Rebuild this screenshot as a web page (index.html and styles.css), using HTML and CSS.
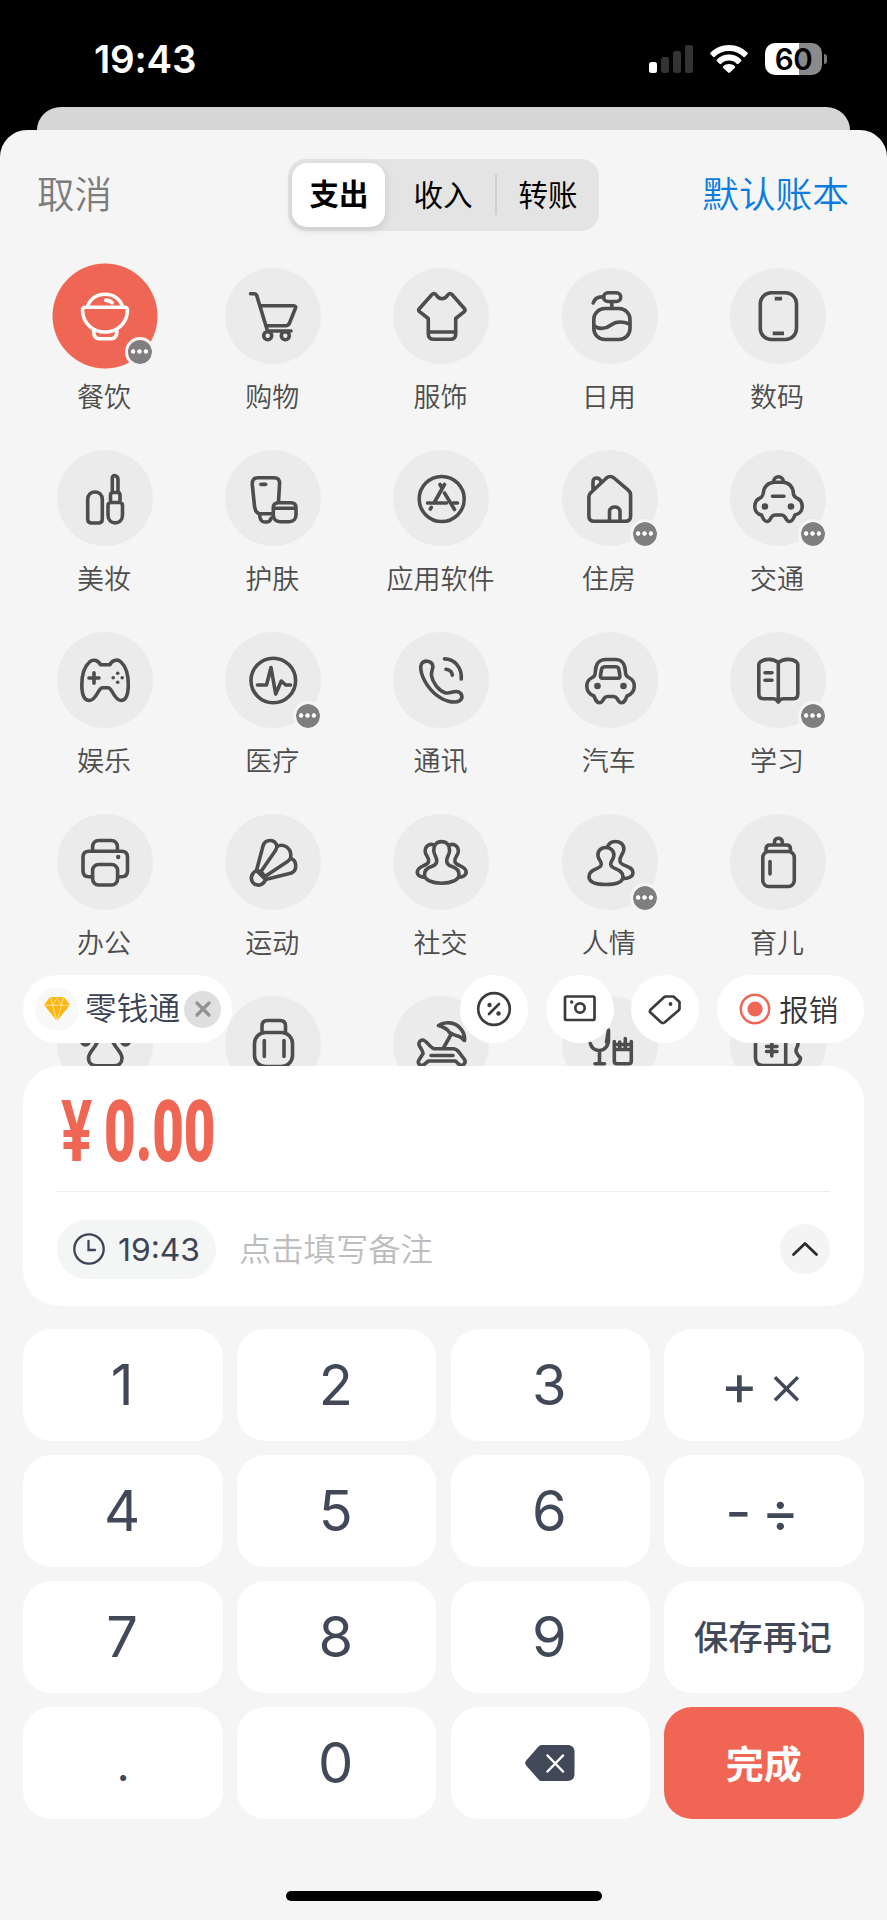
FILE: index.html
```html
<!DOCTYPE html>
<html lang="zh-CN">
<head>
<meta charset="utf-8">
<title>记一笔</title>
<link rel="stylesheet" href="styles.css">
</head>
<body>
<header class="status">
  <span class="status-time">19:43</span>
  <div class="status-icons">
    <svg class="signal" width="44" height="28" viewBox="0 0 44 28"><rect x="0" y="17" width="8" height="11" rx="2.5" fill="#fff"/><g fill="#333"><rect x="12" y="12" width="8" height="16" rx="2.5"/><rect x="24" y="6" width="8" height="22" rx="2.5"/><rect x="36" y="0" width="8" height="28" rx="2.5"/></g></svg>
    <svg class="wifi" width="38" height="28" viewBox="0 0 38 28" fill="#fff"><path d="M19 0C26.5 0 33 3 37.4 7.5c.6.6.6 1.2 0 1.8l-2.4 2.4c-.6.6-1.2.6-1.8 0C29.500 8 24.500 6 19 6S8.500 8 4.800 11.700c-.6.6-1.200.6-1.800 0L.6 9.300c-.6-.6-.6-1.200 0-1.800C5 3 11.500 0 19 0Z"/><path d="M19 9.600c4.700 0 9 1.900 12 4.900.6.6.6 1.200 0 1.800l-2.500 2.400c-.6.6-1.200.6-1.800 0-2-1.900-4.700-3.100-7.700-3.100s-5.700 1.200-7.700 3.100c-.6.6-1.200.6-1.800 0L7 16.300c-.6-.6-.6-1.200 0-1.800 3-3 7.300-4.900 12-4.900Z"/><path d="M19 19c2.200 0 4.200.8 5.700 2.100.6.6.6 1.200 0 1.800l-4.800 4.700c-.6.5-1.200.5-1.800 0l-4.800-4.700c-.6-.6-.6-1.200 0-1.800C14.800 19.800 16.800 19 19 19Z"/></svg>
    <div class="battery"><span>60</span></div>
    <i class="battery-nub"></i>
  </div>
</header>
<div class="back-sheet"></div>
<main class="sheet">
  <nav class="topbar">
    <span class="cancel">取消</span>
    <div class="segment"><span class="seg on">支出</span><span class="seg mid">收入</span><i class="seg-line"></i><span class="seg last">转账</span></div>
    <span class="book">默认账本</span>
  </nav>

  <section class="picker">
    <div class="grid">
      <div class="cat selected"><div class="disc"><svg class="ico" viewBox="0 0 96 96"><path d="M28.500 39.300H67.500c2 0 3.100 1.300 3 3.200C70 55 60.500 64 48 64S26 55 25.500 42.500c-.1-1.900 1-3.200 3-3.200ZM30.500 39C32.500 31 39.500 26.300 48 26.300S63.500 31 65.500 39M36.500 63.500C37 68.500 39 70.800 42 70.800H54.500c3 0 5-2.300 5.500-7.300"/><path d="M49 32.300C51.500 32.300 53.500 33 55 34.500" stroke-width="4"/></svg><b class="more"></b></div><span>餐饮</span></div>
      <div class="cat"><div class="disc"><svg class="ico" viewBox="0 0 96 96"><path d="M25.500 25.700H29c1.500 0 2.300.6 2.800 2L42.500 63H66M35.500 37.700H68.500c2 0 2.500 1.200 1.900 2.700L64.500 55c-.8 2-2 2.700-4 2.700H41"/><circle cx="42.700" cy="67.700" r="4"/><circle cx="60.300" cy="67.700" r="4"/></svg></div><span>购物</span></div>
      <div class="cat"><div class="disc"><svg class="ico" viewBox="0 0 96 96"><path d="M39 26.500C40.500 25 42 25.200 43.200 27 46.500 32 51.500 32 54.800 27 56 25.200 57.500 25 59 26.500L71.500 40.700c.8 1 .8 2-.2 3L62.700 50.500V66c0 3.500-2 5.300-5.300 5.300H41C37.500 71.300 35.300 69.500 35.300 66V50.500L26.500 43.700c-1-.9-1-2-.2-3ZM35.300 64H62.700"/></svg></div><span>服饰</span></div>
      <div class="cat"><div class="disc"><svg class="ico" viewBox="0 0 96 96"><rect x="31.800" y="40.500" width="36.200" height="31" rx="11"/><path d="M32.200 58C37 61.500 44 61 49 57S60 53 67.800 56M49.800 35V40.500M41.500 29C36 28.500 32.500 31 31.200 35"/><rect x="41.700" y="24.800" width="17" height="8.700" rx="4.300"/></svg></div><span>日用</span></div>
      <div class="cat"><div class="disc"><svg class="ico" viewBox="0 0 96 96"><rect x="30.300" y="24.800" width="36.200" height="46.700" rx="11"/><path d="M44.700 30.600H52M42.700 65.400H54" stroke-linecap="butt"/></svg></div><span>数码</span></div>

      <div class="cat"><div class="disc"><svg class="ico" viewBox="0 0 96 96"><path d="M30.700 49.500C30.700 39.500 45.300 39.500 45.300 49.500V69c0 2.500-1.500 4-4 4H34.700c-2.500 0-4-1.500-4-4ZM51 55.500c0-2 1.200-3 3-3h8.500c1.800 0 3 1 3 3V65C65.500 75.500 51 75.500 51 65ZM53.500 52.500V45c0-1.600.9-2.500 2.500-2.500h4.500c1.600 0 2.500.9 2.500 2.500v7.500M55.300 42.500V28C55.300 24.300 61 25 61 29.500v13"/></svg></div><span>美妆</span></div>
      <div class="cat"><div class="disc"><svg class="ico" viewBox="0 0 96 96"><path d="M53.500 52 54.500 35C55 30 53 27.700 49 27.700H33c-4 0-6 2.300-5.700 7L29.500 56c.5 4.500 2.500 7.700 6 7.700H48M34.500 64c.3 5.500 2 8 5 8h2c2.500 0 4-1.500 4.800-4"/><path d="M36 34.300H40.500" stroke-width="3.800"/><path d="M53.500 52.700H66c3.300 0 5 1.800 5 5V65c0 4-2.700 6.700-6.700 6.700H55c-4 0-6.700-2.700-6.700-6.700V57.700c0-3.200 1.900-5 5.200-5ZM48.300 58.300H71"/></svg></div><span>护肤</span></div>
      <div class="cat"><div class="disc"><svg class="ico" viewBox="0 0 96 96"><circle cx="48.700" cy="49" r="22.500"/><path d="M51.500 34.500 41 53M47 34.500 49 38M34.500 53H53.500M60 53H64.500M51.500 43 61.500 59.500M38.300 57.300 37.300 59"/></svg></div><span>应用软件</span></div>
      <div class="cat"><div class="disc"><svg class="ico" viewBox="0 0 96 96"><path d="M28.500 43 44.500 28C47 26 49.500 26 52 28L66.500 40.300C68 41.600 68.600 42.700 68.600 44.700V66c0 3.500-2 5.300-5.300 5.300H32.200c-3.300 0-5.300-1.800-5.300-5.300V47c0-1.800.4-2.800 1.600-4ZM31 40.500V32C31 27 37 26.500 39 31.500M47.500 71V61.500C47.500 55.500 58 55.500 58 61.500V71"/></svg><b class="more"></b></div><span>住房</span></div>
      <div class="cat"><div class="disc"><svg class="ico" viewBox="0 0 96 96"><path d="M44.500 32.300H53C59 32.300 63.200 37 63.400 43.500 63.500 46.500 65 47.300 67.500 48.500 71 50 72.200 53 72.200 56.500 72.200 61 69 64.300 65 65 63.500 68.500 62.500 71.500 59.500 71.500 57 71.500 56.500 69.500 55 67 54 65.500 53.500 65 51.500 65H45c-2 0-2.500.5-3.500 2-1.500 2.500-2 4.500-4.500 4.500-3 0-4-3-5.500-6.500C27.500 64.300 24.800 61 24.800 56.500 24.800 53 26 50 29.300 48.500 31.500 47.300 33 46.500 33.200 43.500 33.500 37 38 32.300 44.500 32.300ZM43.500 32C44 25 53 25 53.500 32M42.500 46.300H54"/><g class="solid"><circle cx="34.900" cy="56.500" r="3.300"/><circle cx="61" cy="56.500" r="3.300"/></g></svg><b class="more"></b></div><span>交通</span></div>

      <div class="cat"><div class="disc"><svg class="ico" viewBox="0 0 96 96"><path d="M43.500 32.700H53C54.500 28.500 60 26.500 64 30 69 34.500 71.500 44 71.300 54 71 63 68.500 68.500 64 68.500 60.500 68.500 57.500 64 55 59.500 53.500 56.700 52.800 55.700 51 55.700H45.500c-1.800 0-2.500 1-4 3.800C39 64 36 68.500 32.500 68.500 27.500 68.500 25 63 24.800 54 24.600 44 27.500 34.500 32.500 30 36.500 26.500 41.500 28.500 43.500 32.700Z"/><path d="M32 46H42M37 40.800V51.200" stroke-width="3.600"/><g class="solid"><circle cx="60.700" cy="41.300" r="1.800"/><circle cx="60.700" cy="50.200" r="1.800"/><circle cx="56.200" cy="45.700" r="1.800"/><circle cx="65.200" cy="45.700" r="1.800"/></g></svg></div><span>娱乐</span></div>
      <div class="cat"><div class="disc"><svg class="ico" viewBox="0 0 96 96"><circle cx="48.300" cy="48.500" r="22.300"/><path d="M32.500 53H41.500L46 35.500 50.700 62 56.300 49 60.700 53H65.500"/></svg><b class="more"></b></div><span>医疗</span></div>
      <div class="cat"><div class="disc"><svg class="ico" viewBox="0 0 96 96"><path d="M28.700 31.500C31.500 28 37.500 28.500 39.500 32.500 41 36 38 38 38.500 43.500 39.500 50.500 45.500 58.500 52 60.700 57 62 59 59.300 63.500 59.500 69 60 70.500 65.500 67 68.500 61.500 72 50.500 69.500 41 61 31 51.500 25.500 38 28.700 31.500ZM51.500 26.900C62 27 69 36 68.300 47M53 37.300C57 38 59.300 40.500 59.300 43.300"/></svg></div><span>通讯</span></div>
      <div class="cat"><div class="disc"><svg class="ico" viewBox="0 0 96 96"><path d="M43.500 27.500H53.500C59.500 27.500 63 32 63.300 38.500 63.500 43.500 64.500 44.500 67.500 46 71.500 48 72.300 51 72.300 54 72.300 59 69 62.500 65 64 63.500 68 62.500 70.800 59.500 70.800 57 70.800 56.500 69 55 66.500 54 65 53.500 64.500 51.500 64.500H45.500c-2 0-2.500.5-3.500 2-1.500 2.500-2 4.300-4.500 4.300-3 0-4-2.800-5.500-6.800C28 62.500 24.800 59 24.800 54 24.800 51 25.500 48 29.500 46 32.500 44.500 33.300 43.500 33.500 38.500 33.800 32 37.500 27.500 43.500 27.500ZM43.500 34.700H53.500c2 0 3 .8 3.400 2.700l1 6.200c.3 1.700-.4 2.600-2 2.600H40.500c-1.600 0-2.300-.9-2-2.600l1-6.200c.4-1.900 2-2.700 4-2.700Z"/><g class="solid"><circle cx="35.500" cy="54" r="3.300"/><circle cx="61.500" cy="54" r="3.300"/></g></svg></div><span>汽车</span></div>
      <div class="cat"><div class="disc"><svg class="ico" viewBox="0 0 96 96"><path d="M48.300 30.700C43.500 26.500 34.500 26.300 30 30.200 29 31 28.800 31.600 28.800 33V62c0 3 1.500 4.700 4.500 4.700H43c2.500 0 4 1 5.300 3.300C49.600 67.700 51 66.700 53.600 66.700H63.300c3 0 4.500-1.700 4.500-4.700V33c0-1.400-.2-2-1.200-2.800C62.200 26.300 53.200 26.500 48.300 30.700ZM48.300 30.700V70M35 40.700H42M35 48.300H42"/></svg><b class="more"></b></div><span>学习</span></div>

      <div class="cat"><div class="disc"><svg class="ico" viewBox="0 0 96 96"><path d="M35.600 37V33c0-4 2.400-6.500 6.400-6.500H54c4 0 6.400 2.500 6.400 6.500V37M35.600 62.700H32c-4 0-6-2-6-6V43.200c0-4 2-6 6-6H64.500c4 0 6 2 6 6V56.700c0 4-2 6-6 6H61"/><rect x="35.600" y="50.500" width="25" height="20.500" rx="6"/><circle class="solid" cx="61.200" cy="43" r="2.200"/></svg></div><span>办公</span></div>
      <div class="cat"><div class="disc"><svg class="ico" viewBox="0 0 96 96"><path d="M31.500 56.500 38 32C40 24.500 50.500 24.500 52 32.500 58 29 66 33.500 65.800 41.500 65.800 42.500 65.700 43 65.500 44.500 71.500 45.500 73 56 66.500 59L40.500 65.500"/><path d="M52 32.500C51.700 34 51.500 34.500 50.500 36.500L36 57.500M65.500 44.500C64 46 64 46.500 62.500 47.500L40 62.500M31.500 56.500C25 60 25 67 29.500 70 33.500 72.500 39 70.500 40.500 65.500ZM31.500 56.500 36.500 58 38.500 60.500 40.500 65.500"/></svg></div><span>运动</span></div>
      <div class="cat"><div class="disc"><svg class="ico" viewBox="0 0 96 96"><path d="M48.600 27.600C43.500 27.600 40.400 31.500 40.700 36.500 41 41 43.500 42.500 43.700 46.500 43.900 50 42 51.500 38.500 52.500 34 54 31.500 57 31.500 60.500 31.500 66 39 69.300 48.700 69.300S66 66 66 60.500C66 57 63.500 54 59 52.500 55.500 51.500 53.500 50 53.700 46.500 54 42.500 56.300 41 56.600 36.500 56.900 31.500 53.700 27.600 48.600 27.600ZM41.500 31.300C36 28.500 31 33 32.500 39 33.500 42.500 36.500 44 35.500 48 34.500 52 26 51.500 24.500 57 23.500 61.500 27.500 63 32 63.500M55.800 31.300C61.500 28.500 66.500 33 65 39 64 42.500 61 44 62 48 63 52 71.500 51.500 73 57 74 61.500 69.500 63 65.500 63.500"/></svg></div><span>社交</span></div>
      <div class="cat"><div class="disc"><svg class="ico" viewBox="0 0 96 96"><path d="M43.800 33.500C38.500 33.500 35.300 37.500 36 42 36.600 46 39.500 47 39.300 50.500 39 55.500 27 54.500 27 62.500 27 68 34 70.500 43.800 70.500S61 68 61 62.500C61 54.500 49 55.500 48.700 50.500 48.500 47 51.200 46 51.800 42 52.500 37.500 49 33.500 43.800 33.500ZM45.500 33.500C46.500 29.500 50 27.500 53.500 27.500 59 27.500 62.500 31.500 61.800 36 61 41 57 42.500 58 47.500 59 52.500 71 51.500 71 58.500 71 62.500 67 64.500 61 64.800"/></svg><b class="more"></b></div><span>人情</span></div>
      <div class="cat"><div class="disc"><svg class="ico" viewBox="0 0 96 96"><path d="M36 37.500V35C36 32.500 37.500 31 40 31H56.500c2.500 0 4 1.500 4 4V37.500M44.500 31V28C44.500 23 52.300 23 52.300 28V31M40 47.500V60"/><rect x="32.800" y="37.500" width="31.500" height="35" rx="6"/></svg></div><span>育儿</span></div>

      <div class="cat"><div class="disc"><svg class="ico" viewBox="0 0 96 96"><path d="M48 40C42 40 41 46 37.500 51 34 55.500 31.500 58 31.500 62 31.500 67 35 69.800 40 69.800H57c5 0 8-2.800 8-7.800 0-4-2.500-6.500-6-11C55.500 46 54 40 48 40Z"/><ellipse cx="28.500" cy="44" rx="4" ry="5"/><ellipse cx="68.500" cy="44" rx="4" ry="5"/></svg></div></div>
      <div class="cat"><div class="disc"><svg class="ico" viewBox="0 0 96 96"><path d="M37 36.500V30C37 26.500 39 24.500 42.500 24.500H55c3.500 0 5.500 2 5.500 5.500V36.500M39.300 44.500V60.500M59 44.500V60.500"/><rect x="29.500" y="36.500" width="38" height="34" rx="11"/></svg></div></div>
      <div class="cat"><div class="disc"><svg class="ico" viewBox="0 0 96 96"><path d="M45.500 29.500C52 25 62 26 67.500 32.500 70.500 36 72 40 71.500 44.500 69 41.500 66.500 40 63 39.500 60.500 38.500 58.500 38 56.500 36.500 54.500 33 50.500 31 45.500 29.500ZM58 38.500 51 51M29 44C33 43 36 51 41 52.700H60c2.500 0 4 1 5.500 3L71.500 63.500C73.500 67 69.500 71 66 68.500L62.500 65H35.500L30.500 69C27 70.500 24 67 26 64L30 57.500C29.500 53 26.500 51.500 26 48.500 25.600 46.500 27 44.500 29 44ZM38 59.500H60"/></svg></div></div>
      <div class="cat"><div class="disc"><svg class="ico" viewBox="0 0 96 96"><path d="M28.300 47.500C29.500 52 33.500 54.700 37.500 54.500 43.500 54.200 47 49 46.500 42V34L44.500 46M37.500 55V67.500M33 67.700H42.500M52.300 53.500H69.300V65c0 1.700-1 2.700-2.700 2.700H55c-1.700 0-2.700-1-2.700-2.700ZM52.300 53.500V45.500M57.700 53V46M63.300 53V42.500M69.300 53V45.500M53 48.500H68.500"/></svg></div></div>
      <div class="cat"><div class="disc"><svg class="ico" viewBox="0 0 96 96"><path d="M25.500 40V62C25.500 66.500 28.500 69.500 33 69.500H64C68 68 70.500 65.500 70.500 62 68 59.500 66.500 58 66 55 65.800 52 68.500 50 68 47L65 40ZM55.700 42V69.500M36.500 50.500H47M36.500 55.500H47M41.800 46V60"/></svg></div></div>
    </div>

    <div class="actions">
      <div class="wallet"><i class="gem"><svg width="26" height="24" viewBox="0 0 26 24"><path d="M6 0H20L26 8 13 24 0 8Z" fill="#fdb60d"/><path d="M0 8.300H26M8.500 8.300 13 24 17.500 8.300M6.500 0 8.500 8 13 1 17.500 8 19.500 0" fill="none" stroke="#fff" stroke-width=".6"/></svg></i><span>零钱通</span><i class="clear"><svg width="18" height="18" viewBox="0 0 18 18"><path d="M3 3 15 15M15 3 3 15" fill="none" stroke="#939393" stroke-width="3.300" stroke-linecap="round"/></svg></i></div>
      <div class="tools">
        <i class="round"><svg width="36" height="36" viewBox="0 0 36 36"><circle cx="18" cy="18" r="15.800"/><path d="M13 23 23 13"/><g class="dot"><circle cx="13.500" cy="14" r="2.200"/><circle cx="22.500" cy="22.500" r="2.200"/></g></svg></i>
        <i class="round"><svg width="36" height="36" viewBox="0 0 36 36"><rect x="3" y="5.500" width="29.500" height="23.500" rx="1.500"/><circle cx="18" cy="17" r="4.700"/><circle class="dot" cx="9.700" cy="11" r="1.700"/></svg></i>
        <i class="round"><svg width="36" height="36" viewBox="0 0 36 36"><path d="M18.500 5.500H26.500L32.500 11V17.500L32 19 17.500 31.500C16 32.500 15.500 32.500 14 31.300L3.500 21.500C2.500 20.500 2.500 20 3.500 18.800L17 6.200Z"/><circle class="dot" cx="23.500" cy="13" r="1.900"/></svg></i>
        <div class="refund"><svg width="32" height="32" viewBox="0 0 32 32"><circle cx="16" cy="16" r="14.200" fill="none" stroke="#ef6654" stroke-width="2.500"/><circle cx="16" cy="16" r="7.600" fill="#ef6654"/></svg><span>报销</span></div>
      </div>
    </div>
  </section>

  <section class="entry">
    <div class="amount"><span class="yen">¥</span><span class="sum">0.00</span></div>
    <div class="note">
      <span class="time"><svg width="32" height="32" viewBox="0 0 32 32"><circle cx="16" cy="16" r="14.700"/><path d="M15.500 8V17H22"/></svg>19:43</span>
      <span class="hint">点击填写备注</span>
      <i class="expand"><svg width="28" height="16" viewBox="0 0 28 16"><path d="M2.500 13.500 14 2.500 25.500 13.500"/></svg></i>
    </div>
  </section>

  <section class="keys">
    <span class="key"><em>1</em></span><span class="key"><em>2</em></span><span class="key"><em>3</em></span><span class="key ops plus"><em>+</em><em>×</em></span>
    <span class="key"><em>4</em></span><span class="key"><em>5</em></span><span class="key"><em>6</em></span><span class="key ops minus"><em>-</em><em>÷</em></span>
    <span class="key"><em>7</em></span><span class="key"><em>8</em></span><span class="key"><em>9</em></span><span class="key again">保存再记</span>
    <span class="key point"><em>.</em></span><span class="key"><em>0</em></span><span class="key del"><svg width="50" height="38" viewBox="0 0 50 38"><path d="M17 1H42c5 0 7.500 2.500 7.500 7V30c0 4.500-2.500 7-7.500 7H17c-1.500 0-2.500-.5-3.500-1.500L1.200 21.500c-1.400-1.600-1.400-3.400 0-5L13.500 2.500C14.500 1.500 15.500 1 17 1Z" fill="#414958"/><path d="M22.500 11.500 38 27.500M38 11.500 22.500 27.500" stroke="#fff" stroke-width="2.500" stroke-linecap="round"/></svg></span><span class="key done">完成</span>
  </section>
  <div class="home"></div>
</main>
</body>
</html>
```
FILE: styles.css
```css
* { box-sizing: border-box; }
body {
  margin: 0;
  width: 887px;
  height: 1920px;
  overflow: hidden;
  background: #000;
  color: #4d4d4d;
  font-family: Inter, "Noto Sans CJK SC", sans-serif;
}
svg { display: block; flex: none; }
i, em { font-style: normal; }

/* status bar */
.status {
  height: 107px;
  display: flex;
  justify-content: space-between;
  align-items: center;
  padding: 11px 60px 0 94px;
  color: #fff;
}
.status-time { font-size: 38.5px; font-weight: 600; line-height: 40px; letter-spacing: -0.2px; }
.status-icons { display: flex; align-items: center; }
.wifi { margin-left: 17px; }
.battery {
  width: 57px;
  height: 32px;
  margin-left: 17px;
  border-radius: 10px;
  background: linear-gradient(90deg, #fff 34px, #8a8a8a 34px);
  color: #000;
  font-size: 29.5px;
  font-weight: 600;
  line-height: 32px;
  text-align: center;
  letter-spacing: -0.3px;
}
.battery-nub { width: 3px; height: 10px; margin-left: 2px; border-radius: 0 3px 3px 0; background: #777; }

/* sheets */
.back-sheet { height: 23px; margin: 0 37px; background: #d6d6d6; border-radius: 24px 24px 0 0 / 23px 23px 0 0; }
.sheet {
  height: 1790px;
  display: flex;
  flex-direction: column;
  background: #f5f5f5;
  border-radius: 27px 27px 0 0;
}

.topbar {
  height: 131px;
  flex: none;
  display: grid;
  grid-template-columns: 1fr 311px 1fr;
  align-items: center;
  padding: 0 38px 2px 37px;
}
.cancel { padding-bottom: 6px; font-size: 37.5px; font-weight: 350; color: #7c7c7c; }
.book { padding-bottom: 6px; font-size: 36.700px; font-weight: 350; color: #0a7be0; text-align: right; }
.segment {
  height: 72px;
  display: flex;
  align-items: center;
  padding: 4px;
  border-radius: 18px;
  background: #e4e4e4;
}
.seg { flex: 1; text-align: center; font-size: 29.500px; color: #000; line-height: 60px; }
.seg.on {
  flex: none;
  width: 93px;
  height: 64px;
  padding-left: 2px;
  line-height: 63px;
  border-radius: 15px;
  background: #fff;
  font-weight: 700;
  box-shadow: 0 3px 10px rgba(0, 0, 0, .12);
}
.seg.mid { flex: none; width: 106px; margin-left: 4px; padding-left: 3px; }
.seg.last { padding-left: 5px; }
.seg-line { width: 2px; height: 41px; background: #cfcfcf; }

/* category picker */
.picker { position: relative; height: 805px; flex: none; overflow: hidden; }
.grid {
  display: grid;
  grid-template-columns: repeat(5, 168.3px);
  grid-auto-rows: 182px;
  justify-content: center;
  padding-top: 7px;
  margin-left: -4px;
}
.cat { display: flex; flex-direction: column; align-items: center; font-size: 27px; font-weight: 350; line-height: 40px; }
.cat > span { margin: 14px 2px 0 0; white-space: nowrap; }
.disc { position: relative; width: 96px; height: 96px; border-radius: 50%; background: #ebebeb; }
.ico {
  position: relative;
  width: 96px;
  height: 96px;
  fill: none;
  stroke: #4d4d4d;
  stroke-width: 3.6;
  stroke-linecap: round;
  stroke-linejoin: round;
}
.ico .solid { fill: #4d4d4d; stroke: none; }
.selected .disc { background: #ef6654; box-shadow: 0 0 0 4.500px #ef6654; }
.selected .ico { stroke: #fff; }
.more {
  position: absolute;
  left: 68px;
  top: 68.5px;
  width: 30px;
  height: 30px;
  border: 3.5px solid #f5f5f5;
  border-radius: 50%;
  background:
    radial-gradient(circle at 5.2px 11.5px, #fff 1.900px, transparent 2.500px),
    radial-gradient(circle at 11.5px 11.5px, #fff 1.900px, transparent 2.500px),
    radial-gradient(circle at 17.800px 11.5px, #fff 1.900px, transparent 2.500px),
    #7f7f7f;
  background-origin: padding-box;
  background-clip: padding-box;
}

/* floating action row */
.actions {
  position: absolute;
  left: 23px;
  right: 23px;
  bottom: 23px;
  height: 68px;
  display: flex;
  justify-content: space-between;
}
.wallet {
  width: 209px;
  display: flex;
  align-items: center;
  padding: 0 11px 0 12px;
  border-radius: 34px;
  background: #fff;
  font-size: 31.700px;
  font-weight: 350;
  color: #3c4254;
}
.wallet span { flex: 1; padding-left: 6px; line-height: 60px; white-space: nowrap; }
.gem, .clear, .round { display: flex; align-items: center; justify-content: center; flex: none; border-radius: 50%; }
.gem { width: 44px; height: 44px; background: #f8f8f8; }
.clear { width: 37px; height: 37px; background: #dfdfdf; }
.tools { display: flex; gap: 17.5px; }
.round { width: 68px; height: 68px; background: #fff; }
.round svg { fill: none; stroke: #3c3c3c; stroke-width: 2.700; stroke-linecap: round; stroke-linejoin: round; }
.round .dot { fill: #3c3c3c; stroke: none; }
.refund {
  width: 147.500px;
  display: flex;
  align-items: center;
  justify-content: center;
  gap: 8px;
  padding: 0 3px 1px 0;
  border-radius: 34px;
  background: #fff;
  font-size: 29.5px;
  font-weight: 350;
  color: #333;
}
.refund span { margin-top: -2px; }

/* amount and note */
.entry {
  height: 240px;
  flex: none;
  margin: 0 23px;
  padding: 0 34px;
  border-radius: 36px;
  background: #fff;
}
.amount {
  height: 126px;
  display: flex;
  align-items: center;
  border-bottom: 1.500px solid #eee;
  padding: 7px 0 0 4px;
  color: #ef6654;
  font: 900 86px/100px Roboto, sans-serif;
}
.yen, .sum { transform-origin: 0 50%; white-space: nowrap; }
.yen { width: 43px; font-weight: 700; transform: scaleX(.68); }
.sum { transform: scaleX(.635); }
.note { display: flex; align-items: center; height: 114px; }
.time {
  width: 159px;
  height: 59px;
  display: flex;
  align-items: center;
  gap: 13px;
  padding-left: 16px;
  border-radius: 30px;
  background: #f4f5f5;
  color: #3d4456;
  font-size: 31.800px;
}
.time svg { fill: none; stroke: #3d4456; stroke-width: 2.300; stroke-linecap: round; }
.hint { margin-left: 23px; padding-bottom: 4px; font-size: 32.300px; font-weight: 350; color: #bdbdbd; }
.expand {
  width: 50px;
  height: 50px;
  margin-left: auto;
  display: flex;
  align-items: center;
  justify-content: center;
  border-radius: 50%;
  background: #f4f4f4;
}
.expand svg { fill: none; stroke: #2b2b2b; stroke-width: 2.800; stroke-linecap: round; stroke-linejoin: round; }

/* keypad */
.keys {
  display: grid;
  grid-template-columns: repeat(4, 199.400px);
  grid-auto-rows: 112.2px;
  gap: 14px 14.200px;
  justify-content: center;
  margin-top: 22.5px;
}
.key {
  display: flex;
  align-items: center;
  justify-content: center;
  border-radius: 28px;
  background: #fff;
  color: #414958;
  font-size: 56px;
  line-height: 60px;
  padding-right: 2px;
}
.ops { font-size: 57px; padding-top: 1px; }
.ops em { width: 47px; display: flex; justify-content: center; }
.plus em + em { font-size: 57px; font-weight: 350; }
.minus { padding-right: 9px; padding-top: 3px; }
.minus em { width: 42px; }
.point { font-size: 46px; padding: 2px 0 0; }
.del { padding: 0; }
.again { font-size: 34.500px; font-weight: 500; padding-top: 2px; }
.done { background: #f06553; color: #fff; font-size: 38px; font-weight: 700; padding: 2px 0 0; }
.home { width: 316px; height: 10px; margin: auto auto 19px; border-radius: 5px; background: #000; }
```
